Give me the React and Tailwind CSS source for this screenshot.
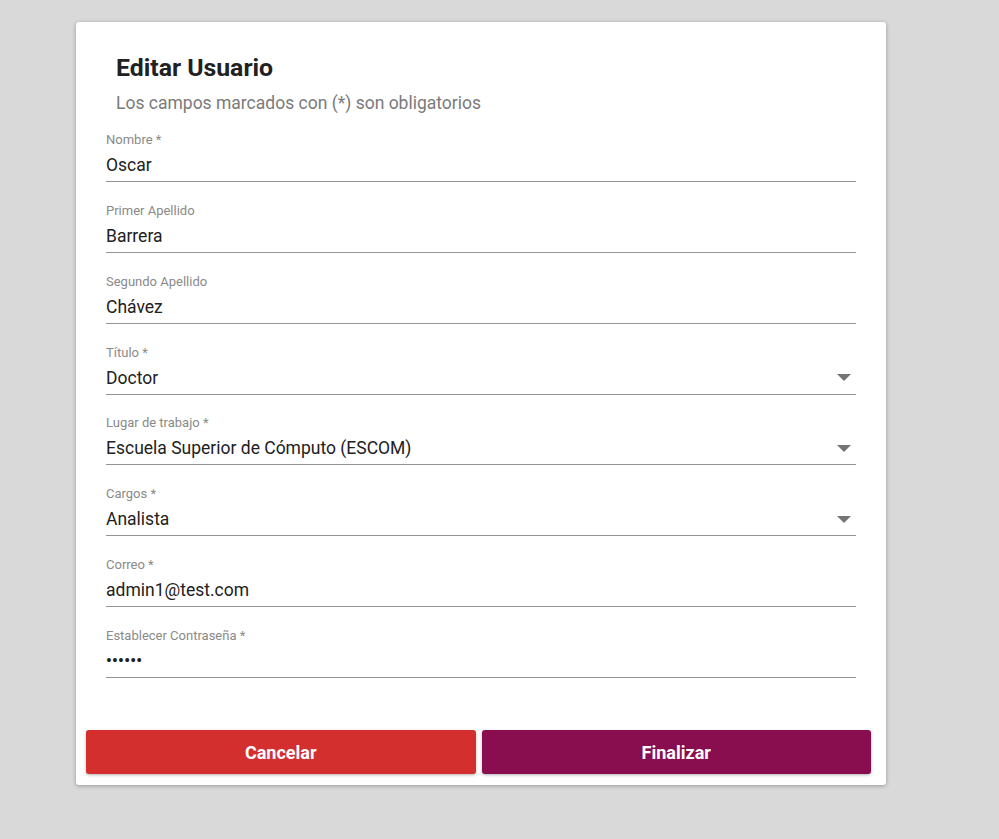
import React from "react";

const fields = [
  { label: "Nombre *", value: "Oscar" },
  { label: "Primer Apellido", value: "Barrera" },
  { label: "Segundo Apellido", value: "Chávez" },
  { label: "Título *", value: "Doctor", select: true },
  { label: "Lugar de trabajo *", value: "Escuela Superior de Cómputo (ESCOM)", select: true },
  { label: "Cargos *", value: "Analista", select: true },
  { label: "Correo *", value: "admin1@test.com" },
  { label: "Establecer Contraseña *", value: "••••••", password: true },
];

function Field({ label, value, select, password }) {
  return (
    <div className="flex flex-col border-b border-[#949494] pb-[4px]">
      <div className="text-[13px] leading-[16px] text-[#8a8a8a]">{label}</div>
      <div className="mt-[5px] flex h-[24px] items-center justify-between">
        {password ? (
          <span className="text-[16px] font-bold leading-[24px] tracking-[0.3px] text-[#212121]">{value}</span>
        ) : (
          <span className="text-[17.5px] leading-[24px] text-[#212121]">{value}</span>
        )}
        {select && (
          <svg width="14" height="7" viewBox="0 0 14 7" className="mr-[5px]">
            <path d="M0 0 L14 0 L7 7 Z" fill="#757575" />
          </svg>
        )}
      </div>
    </div>
  );
}

export default function App() {
  return (
    <div
      className="min-h-[839px] w-full bg-[#d9d9d9] pt-[22px] pl-[76px]"
      style={{ fontFamily: "Roboto, 'Liberation Sans', sans-serif" }}
    >
      <div className="flex w-[810px] flex-col rounded-[3px] bg-white pt-[32px] pb-[11px] shadow-[0_1px_4px_rgba(0,0,0,0.3)]">
        <div className="pl-[40px]">
          <h1 className="text-[24.8px] font-bold leading-[28px] text-[#212121]">Editar Usuario</h1>
          <p className="mt-[9px] text-[17.5px] leading-[24px] text-[#7a7a7a]">
            Los campos marcados con (*) son obligatorios
          </p>
        </div>
        <div className="mt-[17px] flex flex-col gap-[20.86px] px-[30px]">
          {fields.map((f) => (
            <Field key={f.label} {...f} />
          ))}
        </div>
        <div className="mt-[52px] ml-[10px] mr-[15px] flex gap-[6px]">
          <button className="h-[44px] flex-1 rounded-[3px] bg-[#d32f2f] text-[18px] font-bold text-white shadow-[0_1px_3px_rgba(0,0,0,0.3)]">
            Cancelar
          </button>
          <button className="h-[44px] flex-1 rounded-[3px] bg-[#880e4f] text-[18px] font-bold text-white shadow-[0_1px_3px_rgba(0,0,0,0.3)]">
            Finalizar
          </button>
        </div>
      </div>
    </div>
  );
}
